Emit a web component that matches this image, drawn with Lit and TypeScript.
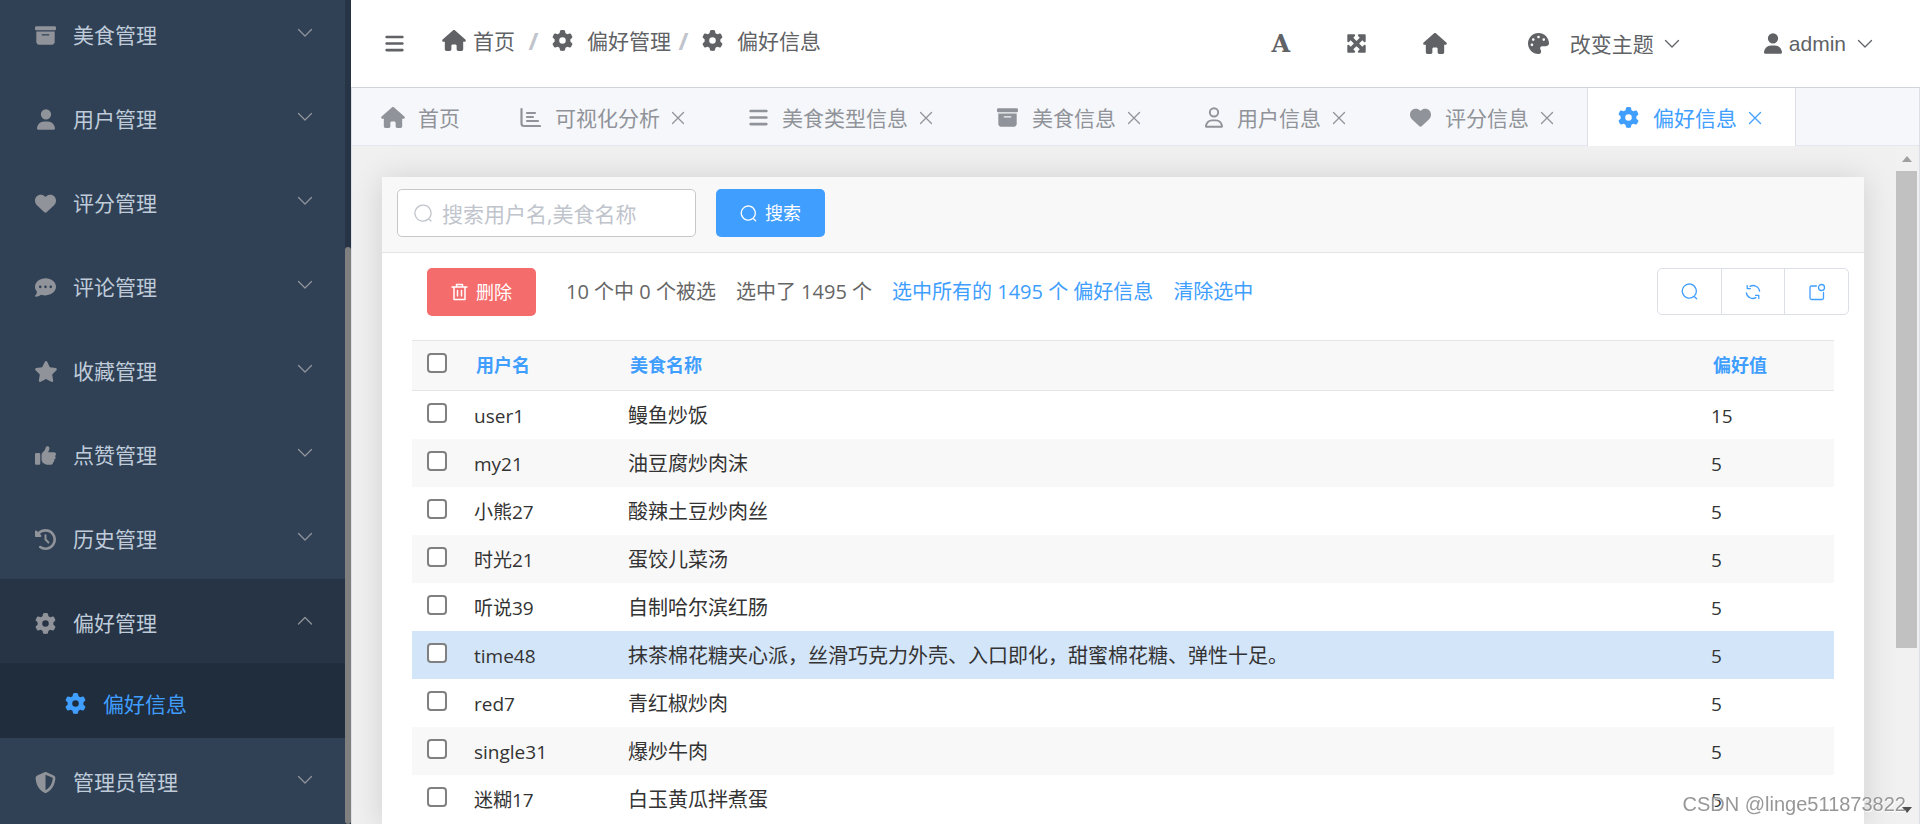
import { LitElement, html, svg, css, nothing } from "lit";
import { customElement, property, state } from "lit/decorators.js";
import { classMap } from "lit/directives/class-map.js";

interface Glyph {
  box: string;
  width: number;
  height: number;
  body: unknown;
}

const solid = (w: number, width: number, d: string): Glyph => ({
  box: `0 0 ${w} 512`,
  width,
  height: 21,
  body: svg`<path fill="currentColor" fill-rule="evenodd" d=${d}></path>`,
});

const line = (width: number, height: number, d: string, stroke = 1.3): Glyph => ({
  box: `0 0 ${width} ${height}`,
  width,
  height,
  body: svg`<path fill="none" stroke="currentColor" stroke-width=${stroke} stroke-linecap="round" stroke-linejoin="round" d=${d}></path>`,
});

const GLYPHS: Record<string, Glyph> = {
  home: solid(576, 24, "M575.8 255.5c0 18-15 32.1-32 32.1h-32l.7 160.2c0 2.7-.2 5.4-.5 8.1V472c0 22.1-17.9 40-40 40H456c-1.1 0-2.2 0-3.3-.1c-1.4 .1-2.8 .1-4.2 .1H416 392c-22.1 0-40-17.9-40-40V448 384c0-17.7-14.3-32-32-32H256c-17.7 0-32 14.3-32 32v64 24c0 22.1-17.9 40-40 40H160 128.1c-1.5 0-3-.1-4.5-.2c-1.2 .1-2.4 .2-3.6 .2H104c-22.1 0-40-17.9-40-40V360c0-.9 0-1.9 .1-2.8V287.6H32c-18 0-32-14-32-32.1c0-9 3-17 10-24L266.4 8c7-7 15-8 22-8s15 2 21 7L564.8 231.5c8 7 12 15 11 24z"),
  gear: solid(512, 21, "M495.9 166.6c3.2 8.7 .5 18.4-6.4 24.6l-43.3 39.4c1.1 8.3 1.7 16.8 1.7 25.4s-.6 17.1-1.7 25.4l43.3 39.4c6.9 6.2 9.6 15.9 6.4 24.6c-4.4 11.9-9.7 23.3-15.8 34.3l-4.7 8.1c-6.6 11-14 21.4-22.1 31.2c-5.9 7.2-15.7 9.6-24.5 6.8l-55.7-17.7c-13.4 10.3-28.2 18.9-44 25.4l-12.5 57.1c-2 9.1-9 16.3-18.2 17.8c-13.8 2.3-28 3.5-42.5 3.5s-28.7-1.2-42.5-3.5c-9.2-1.5-16.2-8.7-18.2-17.8l-12.5-57.1c-15.8-6.5-30.6-15.1-44-25.4L83.1 425.9c-8.8 2.8-18.6 .3-24.5-6.8c-8.1-9.8-15.5-20.2-22.1-31.2l-4.7-8.1c-6.1-11-11.4-22.4-15.8-34.3c-3.2-8.7-.5-18.4 6.4-24.6l43.3-39.4C64.6 273.1 64 264.6 64 256s.6-17.1 1.7-25.4L22.4 191.2c-6.9-6.2-9.6-15.9-6.4-24.6c4.4-11.9 9.7-23.3 15.8-34.3l4.7-8.1c6.6-11 14-21.4 22.1-31.2c5.9-7.2 15.7-9.6 24.5-6.8l55.7 17.7c13.4-10.3 28.2-18.9 44-25.4l12.5-57.1c2-9.1 9-16.3 18.2-17.8C227.3 1.2 241.5 0 256 0s28.7 1.2 42.5 3.5c9.2 1.5 16.2 8.7 18.2 17.8l12.5 57.1c15.8 6.5 30.6 15.1 44 25.4l55.7-17.7c8.8-2.8 18.6-.3 24.5 6.8c8.1 9.8 15.5 20.2 22.1 31.2l4.7 8.1c6.1 11 11.4 22.4 15.8 34.3zM256 336a80 80 0 1 0 0-160 80 80 0 1 0 0 160z"),
  user: solid(448, 18, "M224 256A128 128 0 1 0 224 0a128 128 0 1 0 0 256zm-45.7 48C79.8 304 0 383.8 0 482.3C0 498.7 13.3 512 29.7 512H418.3c16.4 0 29.7-13.3 29.7-29.7C448 383.8 368.2 304 269.7 304H178.3z"),
  userOutline: solid(448, 18, "M304 128a80 80 0 1 0 -160 0 80 80 0 1 0 160 0zM96 128a128 128 0 1 1 256 0A128 128 0 1 1 96 128zM49.3 464H398.7c-8.9-63.3-63.3-112-129-112H178.3c-65.7 0-120.1 48.7-129 112zM0 482.3C0 383.8 79.8 304 178.3 304h91.4C368.2 304 448 383.8 448 482.3c0 16.4-13.3 29.7-29.7 29.7H29.7C13.3 512 0 498.7 0 482.3z"),
  heart: solid(512, 21, "M47.6 300.4L228.3 469.1c7.5 7 17.4 10.9 27.7 10.9s20.2-3.9 27.7-10.9L464.4 300.4c30.4-28.3 47.6-68 47.6-109.5v-5.8c0-69.9-50.5-129.5-119.4-141C347 36.5 300.6 51.4 268 84L256 96 244 84c-32.6-32.6-79-47.5-124.6-39.9C50.5 55.6 0 115.2 0 185.1v5.8c0 41.5 17.2 81.2 47.6 109.5z"),
  archive: solid(512, 21, "M32 32H480c17.7 0 32 14.3 32 32V96c0 17.7-14.3 32-32 32H32C14.3 128 0 113.7 0 96V64C0 46.3 14.3 32 32 32zm0 128H480V416c0 35.3-28.7 64-64 64H96c-35.3 0-64-28.7-64-64V160zm128 80c0 8.8 7.2 16 16 16H336c8.8 0 16-7.2 16-16s-7.2-16-16-16H176c-8.8 0-16 7.2-16 16z"),
  star: solid(576, 24, "M316.9 18C311.6 7 300.4 0 288.1 0s-23.4 7-28.8 18L195 150.3 51.4 171.5c-12 1.8-22 10.2-25.7 21.7s-.7 24.2 7.9 32.7L137.8 329 113.2 474.7c-2 12 3 24.2 12.9 31.3s23 8 33.8 2.3l128.3-68.5 128.3 68.5c10.8 5.7 23.9 4.9 33.8-2.3s14.9-19.3 12.9-31.3L438.5 329 542.7 225.9c8.6-8.5 11.7-21.2 7.9-32.7s-13.7-19.9-25.7-21.7L381.2 150.3 316.9 18z"),
  comment: solid(512, 21, "M256 448c141.4 0 256-93.1 256-208S397.4 32 256 32S0 125.1 0 240c0 45.1 17.7 86.8 47.7 120.9c-1.9 24.5-11.4 46.3-21.4 62.9c-5.5 9.2-11.1 16.6-15.2 21.6c-2.1 2.5-3.7 4.4-4.9 5.7c-.6 .6-1 1.1-1.3 1.4l-.3 .3c-4.6 4.6-5.9 11.4-3.4 17.4c2.5 6 8.3 9.9 14.8 9.9c28.7 0 57.6-8.9 81.6-19.3c22.9-10 42.4-21.9 54.3-30.6c31.8 11.5 67 17.9 104.1 17.9zM128 208a32 32 0 1 1 0 64 32 32 0 1 1 0-64zm128 0a32 32 0 1 1 0 64 32 32 0 1 1 0-64zm96 32a32 32 0 1 1 64 0 32 32 0 1 1 -64 0z"),
  thumb: solid(512, 21, "M313.4 32.9c26 5.2 42.9 30.5 37.7 56.5l-2.3 11.4c-5.3 26.7-15.1 52.1-28.8 75.2H464c26.5 0 48 21.5 48 48c0 18.5-10.5 34.6-25.9 42.6C497 275.4 504 288.9 504 304c0 23.4-16.8 42.9-38.9 47.1c4.4 7.3 6.9 15.8 6.9 24.9c0 21.3-13.9 39.4-33.1 45.6c.7 3.3 1.1 6.8 1.1 10.4c0 26.5-21.5 48-48 48H294.5c-19 0-37.5-5.6-53.3-16.1l-38.5-25.7C176 420.4 160 390.4 160 358.3V320 272 247.1c0-29.2 13.3-56.7 36-75l7.4-5.9c26.5-21.2 44.6-51 51.2-84.2l2.3-11.4c5.2-26 30.5-42.9 56.5-37.7zM32 192H96c17.7 0 32 14.3 32 32V448c0 17.7-14.3 32-32 32H32c-17.7 0-32-14.3-32-32V224c0-17.7 14.3-32 32-32z"),
  history: solid(512, 21, "M75 75L41 41C25.9 25.9 0 36.6 0 57.9V168c0 13.3 10.7 24 24 24H134.1c21.4 0 32.1-25.9 17-41l-30.8-30.8C155 85.5 203 64 256 64c106 0 192 86 192 192s-86 192-192 192c-40.8 0-78.6-12.7-109.7-34.4c-14.5-10.1-34.4-6.6-44.6 7.9s-6.6 34.4 7.9 44.6C151.2 495 201.7 512 256 512c141.4 0 256-114.6 256-256S397.4 0 256 0C185.3 0 121.3 28.7 75 75zm181 53c-13.3 0-24 10.7-24 24V256c0 6.4 2.5 12.5 7 17l72 72c9.4 9.4 24.6 9.4 33.9 0s9.4-24.6 0-33.9l-65-65V152c0-13.3-10.7-24-24-24z"),
  shield: solid(512, 21, "M256 0c4.6 0 9.2 1 13.4 2.9L457.7 82.8c22 9.3 38.4 31 38.3 57.2c-.5 99.2-41.3 280.7-213.6 363.2c-16.7 8-36.1 8-52.8 0C57.3 420.7 16.5 239.2 16 140c-.1-26.2 16.3-47.9 38.3-57.2L242.7 2.9C246.8 1 251.4 0 256 0zm0 66.8V444.8C394 378 431.1 230.1 432 141.4L256 66.8z"),
  bars: solid(448, 19, "M0 96C0 78.3 14.3 64 32 64H416c17.7 0 32 14.3 32 32s-14.3 32-32 32H32C14.3 128 0 113.7 0 96zM0 256c0-17.7 14.3-32 32-32H416c17.7 0 32 14.3 32 32s-14.3 32-32 32H32c-17.7 0-32-14.3-32-32zM448 416c0 17.7-14.3 32-32 32H32c-17.7 0-32-14.3-32-32s14.3-32 32-32H416c17.7 0 32 14.3 32 32z"),
  palette: solid(512, 21, "M512 256c0 .9 0 1.8 0 2.7c-.4 36.5-33.6 61.3-70.1 61.3H344c-26.5 0-48 21.5-48 48c0 3.4 .4 6.7 1 9.9c2.1 10.2 6.5 20 10.8 29.9c6.1 13.8 12.1 27.5 12.1 42c0 31.8-21.6 60.7-53.4 62c-3.5 .1-7 .2-10.6 .2C114.6 512 0 397.4 0 256S114.6 0 256 0S512 114.6 512 256zM128 288a32 32 0 1 0 -64 0 32 32 0 1 0 64 0zm0-96a32 32 0 1 0 0-64 32 32 0 1 0 0 64zM288 96a32 32 0 1 0 -64 0 32 32 0 1 0 64 0zm96 96a32 32 0 1 0 0-64 32 32 0 1 0 0 64z"),
  expand: solid(512, 21, "M200 32H56C42.7 32 32 42.7 32 56V200c0 9.7 5.8 18.5 14.8 22.2s19.3 1.7 26.2-5.2l40-40 79 79-79 79L73 295c-6.9-6.9-17.2-8.9-26.2-5.2S32 302.3 32 312V456c0 13.3 10.7 24 24 24H200c9.7 0 18.5-5.8 22.2-14.8s1.7-19.3-5.2-26.2l-40-40 79-79 79 79-40 40c-6.9 6.9-8.9 17.2-5.2 26.2s12.5 14.8 22.2 14.8H456c13.3 0 24-10.7 24-24V312c0-9.7-5.8-18.5-14.8-22.2s-19.3-1.7-26.2 5.2l-40 40-79-79 79-79 40 40c6.9 6.9 17.2 8.9 26.2 5.2s14.8-12.5 14.8-22.2V56c0-13.3-10.7-24-24-24H312c-9.7 0-18.5 5.8-22.2 14.8s-1.7 19.3 5.2 26.2l40 40-79 79-79-79 40-40c6.9-6.9 8.9-17.2 5.2-26.2S209.7 32 200 32z"),
  chart: line(21, 21, "M1.5 2V16.5Q1.5 19 4 19H20M7 6H15M7 10H13M7 14H18", 2.2),
  down: line(16, 10, "M1.5 1.5L8 8L14.5 1.5"),
  up: line(16, 10, "M1.5 8L8 1.5L14.5 8"),
  close: line(14, 14, "M1.5 1.5L12.5 12.5M12.5 1.5L1.5 12.5"),
  search: line(18, 18, "M14.6 14.8A8 8 0 1 1 15.6 13.6M14.6 14.8L17 17"),
  searchSmall: line(17, 17, "M13 13.2A7 7 0 1 1 13.9 12.2M13 13.2L15.6 15.8"),
  trash: line(17, 18, "M1 4H16M5.5 4V1.5H11.5V4M3 4V16.5H14V4M6.5 7.5V13M10.5 7.5V13", 1.5),
  refresh: line(16, 16, "M5 2.3A6.6 6.6 0 0 1 14.6 7.2M1.4 8.8A6.6 6.6 0 0 0 11 13.7M2.2 1.6V4.6H5.4M13.8 14.4V11.4H10.6"),
  note: line(18, 18, "M8.5 3H3.5Q2 3 2 4.5V15Q2 16.5 3.5 16.5H14Q15.5 16.5 15.5 15V9.5M16.5 4.5A3 3 0 1 1 10.5 4.5A3 3 0 1 1 16.5 4.5"),
};

@customElement("ui-icon")
export class UiIcon extends LitElement {
  static styles = css`
    :host {
      display: inline-flex;
      flex: none;
    }
    .glyph {
      display: block;
    }
  `;

  @property() name = "home";

  render() {
    const g = GLYPHS[this.name];
    return html`<svg class="glyph" viewBox=${g.box} width=${g.width} height=${g.height} aria-hidden="true">${g.body}</svg>`;
  }
}

@customElement("side-menu")
export class SideMenu extends LitElement {
  static styles = css`
    :host {
      display: flex;
      flex: none;
      width: 351px;
      background: #304156;
      overflow: hidden;
      font-size: 21px;
    }
    .list {
      flex: 1;
      display: flex;
      flex-direction: column;
      justify-content: flex-end;
      padding-bottom: 2px;
    }
    .item {
      flex: none;
      box-sizing: border-box;
      display: flex;
      align-items: center;
      height: 84px;
      padding: 0 32px 0 33px;
      color: #bfcbd9;
      text-decoration: none;
      line-height: 30px;
    }
    .icon {
      display: flex;
      justify-content: center;
      width: 25px;
      margin-right: 15px;
      padding-top: 4px;
      color: #909399;
    }
    .label {
      flex: 1;
      padding-top: 4px;
    }
    .arrow {
      color: #909399;
    }
    .open {
      background: #263445;
    }
    .sub {
      height: 75px;
      padding-top: 2px;
      padding-left: 63px;
      background: #1f2d3d;
      color: #409eff;
    }
    .sub .icon {
      color: #409eff;
    }
    .track {
      display: flex;
      flex-direction: column;
      justify-content: flex-end;
      width: 6px;
      background: #263445;
    }
    .thumb {
      height: 70%;
      border-radius: 3px;
      background: #7f7f7f;
    }
  `;

  private items = [
    ["archive", "美食管理"],
    ["user", "用户管理"],
    ["heart", "评分管理"],
    ["comment", "评论管理"],
    ["star", "收藏管理"],
    ["thumb", "点赞管理"],
    ["history", "历史管理"],
    ["gear", "偏好管理", "偏好信息"],
    ["shield", "管理员管理"],
  ];

  render() {
    return html`
      <nav class="list">
        ${this.items.map(
          ([icon, label, child]) => html`
            <a class=${classMap({ item: true, open: !!child })} href="#">
              <span class="icon"><ui-icon name=${icon}></ui-icon></span>
              <span class="label">${label}</span>
              <ui-icon class="arrow" name=${child ? "up" : "down"}></ui-icon>
            </a>
            ${child
              ? html`<a class="item sub" href="#">
                  <span class="icon"><ui-icon name=${icon}></ui-icon></span>
                  <span class="label">${child}</span>
                </a>`
              : nothing}
          `
        )}
      </nav>
      <div class="track"><div class="thumb"></div></div>
    `;
  }
}

@customElement("top-bar")
export class TopBar extends LitElement {
  static styles = css`
    :host {
      display: flex;
      flex: none;
      align-items: center;
      justify-content: space-between;
      height: 87px;
      padding: 0 47px 0 34px;
      background: #fff;
      color: #606266;
      font-size: 21px;
      line-height: 30px;
    }
    .group,
    .crumbs,
    .crumb,
    .action {
      display: flex;
      align-items: center;
    }
    .action {
      padding: 0;
      border: 0;
      background: none;
      color: inherit;
      font: inherit;
      line-height: 30px;
    }
    .crumbs {
      margin-left: 38px;
      padding-bottom: 6px;
    }
    .crumb {
      gap: 14px;
      color: inherit;
      text-decoration: none;
    }
    .first {
      gap: 7px;
      padding-right: 6px;
    }
    .slash {
      width: 11px;
      margin: 0 13px 0 7px;
      color: #c0c4cc;
      font-weight: 700;
      font-size: 24px;
      text-align: center;
    }
    .tools {
      gap: 56px;
      margin-right: 81px;
    }
    .letter {
      width: 18px;
      justify-content: center;
      font-family: "DejaVu Serif", serif;
      font-size: 24px;
      font-weight: 700;
    }
    .theme {
      gap: 10px;
      margin-right: 84px;
    }
    .swatch {
      margin-right: 11px;
    }
    .account {
      gap: 7px;
      font-family: "Liberation Sans", Arial, sans-serif;
    }
    .name {
      margin-right: 4px;
    }
  `;

  render() {
    return html`
      <div class="group">
        <button class="action" aria-label="折叠菜单"><ui-icon name="bars"></ui-icon></button>
        <nav class="crumbs">
          <a class="crumb first" href="#"><ui-icon name="home"></ui-icon>首页</a>
          <span class="slash">/</span>
          <a class="crumb" href="#"><ui-icon name="gear"></ui-icon>偏好管理</a>
          <span class="slash">/</span>
          <a class="crumb" href="#"><ui-icon name="gear"></ui-icon>偏好信息</a>
        </nav>
      </div>
      <div class="group">
        <div class="group tools">
          <button class="action letter" aria-label="字号">A</button>
          <button class="action" aria-label="全屏"><ui-icon name="expand"></ui-icon></button>
          <button class="action" aria-label="首页"><ui-icon name="home"></ui-icon></button>
        </div>
        <button class="action theme">
          <ui-icon class="swatch" name="palette"></ui-icon>改变主题<ui-icon name="down"></ui-icon>
        </button>
        <button class="action account">
          <ui-icon name="user"></ui-icon><span class="name">admin</span><ui-icon name="down"></ui-icon>
        </button>
      </div>
    `;
  }
}

@customElement("tab-strip")
export class TabStrip extends LitElement {
  static styles = css`
    :host {
      display: flex;
      flex: none;
      height: 57px;
      background: #f5f7fa;
      border-bottom: 1px solid #e4e7ed;
      color: #909399;
      font-size: 21px;
      line-height: 30px;
    }
    .tab {
      display: flex;
      align-items: center;
      margin: 0 0 -2px -1px;
      padding: 0 30px;
      border: 1px solid transparent;
      border-width: 0 1px;
    }
    .active {
      background: #fff;
      border-color: #dcdfe6;
      color: #409eff;
    }
    .link {
      display: flex;
      align-items: center;
      gap: 14px;
      color: inherit;
      text-decoration: none;
      white-space: nowrap;
    }
    .fixed {
      padding: 0 29px;
    }
    .fixed .link {
      gap: 13px;
    }
    .close {
      display: flex;
      justify-content: center;
      width: 19px;
      margin: 0 1px 0 8px;
      padding: 0;
      border: 0;
      background: none;
      color: inherit;
    }
  `;

  private tabs = [
    ["home", "首页"],
    ["chart", "可视化分析"],
    ["bars", "美食类型信息"],
    ["archive", "美食信息"],
    ["userOutline", "用户信息"],
    ["heart", "评分信息"],
    ["gear", "偏好信息"],
  ];

  render() {
    return this.tabs.map(
      ([icon, label], i) => html`
        <div class=${classMap({ tab: true, fixed: !i, active: i === this.tabs.length - 1 })}>
          <a class="link" href="#"><ui-icon name=${icon}></ui-icon>${label}</a>
          ${i
            ? html`<button class="close" aria-label="关闭${label}"><ui-icon name="close"></ui-icon></button>`
            : nothing}
        </div>
      `
    );
  }
}

@customElement("preference-table")
export class PreferenceTable extends LitElement {
  static styles = css`
    :host {
      display: block;
      padding: 24px 30px 0;
    }
    .table {
      width: 100%;
      table-layout: fixed;
      border-collapse: collapse;
      color: #333;
      font-size: 19px;
      text-align: left;
    }
    .pick {
      width: 47px;
    }
    .who {
      width: 154px;
    }
    .score {
      width: 138px;
    }
    .head {
      height: 50px;
      background: #f8f8f8;
      border: 1px solid #e5e5e5;
      border-width: 1px 0;
      color: #409eff;
    }
    .title {
      padding: 0 17px 2px;
      font-size: 18px;
      font-weight: 700;
      line-height: 24px;
    }
    .row {
      height: 48px;
    }
    .row:nth-child(even) {
      background: #f8f8f8;
    }
    .row.hover {
      background: #d3e5f9;
    }
    .cell {
      padding: 2px 15px 0;
      line-height: 46px;
      white-space: nowrap;
    }
    .food {
      font-size: 20px;
    }
    .tick {
      padding: 12px 0 0 15px;
      vertical-align: top;
    }
    .box {
      appearance: none;
      display: block;
      box-sizing: border-box;
      width: 20px;
      height: 20px;
      margin: 0;
      border: 2px solid #808080;
      border-radius: 4px;
      background: #fff;
    }
    .box:checked {
      background: #409eff;
    }
  `;

  private rows: [string, string, number][] = [
    ["user1", "鳗鱼炒饭", 15],
    ["my21", "油豆腐炒肉沫", 5],
    ["小熊27", "酸辣土豆炒肉丝", 5],
    ["时光21", "蛋饺儿菜汤", 5],
    ["听说39", "自制哈尔滨红肠", 5],
    ["time48", "抹茶棉花糖夹心派，丝滑巧克力外壳、入口即化，甜蜜棉花糖、弹性十足。", 5],
    ["red7", "青红椒炒肉", 5],
    ["single31", "爆炒牛肉", 5],
    ["迷糊17", "白玉黄瓜拌煮蛋", 5],
  ];

  @state() private hovered = 5;

  render() {
    return html`
      <table class="table">
        <colgroup>
          <col class="pick" /><col class="who" /><col /><col class="score" />
        </colgroup>
        <thead>
          <tr class="head">
            <th class="tick"><input class="box" type="checkbox" aria-label="全选" /></th>
            <th class="title">用户名</th>
            <th class="title">美食名称</th>
            <th class="title">偏好值</th>
          </tr>
        </thead>
        <tbody>
          ${this.rows.map(
            ([who, food, score], i) => html`
              <tr class=${classMap({ row: true, hover: i === this.hovered })} @mouseenter=${() => (this.hovered = i)}>
                <td class="tick"><input class="box" type="checkbox" aria-label=${who} /></td>
                <td class="cell">${who}</td>
                <td class="cell food">${food}</td>
                <td class="cell">${score}</td>
              </tr>
            `
          )}
        </tbody>
      </table>
    `;
  }
}

@customElement("app-root")
export class AppRoot extends LitElement {
  static styles = css`
    :host {
      display: flex;
      height: 100vh;
      overflow: hidden;
      font-family: "Open Sans", "Noto Sans CJK SC", sans-serif;
      font-weight: 400;
    }
    .main {
      flex: 1;
      min-width: 0;
      display: flex;
      flex-direction: column;
    }
    .frame {
      flex: 1;
      min-height: 0;
      display: flex;
      flex-direction: column;
      border: 1px solid #dcdfe6;
      border-top-color: #d0d3da;
      border-bottom: 0;
    }
    .view {
      flex: 1;
      min-height: 0;
      display: flex;
      padding-right: 2px;
      background: #f0f0f0;
    }
    .page {
      flex: 1;
      min-width: 0;
      overflow: hidden;
      padding: 31px 32px 0 30px;
    }
    .card {
      min-height: 100%;
      background: #fff;
      box-shadow: 0 2px 30px rgba(0, 0, 0, 0.14);
    }
    .filter {
      display: flex;
      gap: 20px;
      padding: 12px 15px 15px;
      background: #f8f8f8;
      border-bottom: 1px solid #e5e5e5;
    }
    .field {
      box-sizing: border-box;
      display: flex;
      align-items: center;
      gap: 10px;
      width: 299px;
      height: 48px;
      padding: 0 16px;
      border: 1px solid #c8c8c8;
      border-radius: 5px;
      background: #fff;
      color: #c0c4cc;
    }
    .input {
      flex: 1;
      min-width: 0;
      padding: 2px 0 0;
      border: 0;
      outline: 0;
      background: none;
      color: #606266;
      font-family: inherit;
      font-size: 21px;
      line-height: 30px;
    }
    .input::placeholder {
      color: #c0c4cc;
    }
    .btn {
      display: flex;
      align-items: center;
      gap: 8px;
      height: 48px;
      padding: 0 24px;
      border: 0;
      border-radius: 5px;
      background: #409eff;
      color: #fff;
      font-family: inherit;
      font-size: 18px;
      line-height: 24px;
    }
    .danger {
      margin-right: 10px;
      background: #f56c6c;
    }
    .toolbar {
      display: flex;
      align-items: center;
      gap: 20px;
      padding: 15px 15px 0 45px;
      color: #666;
      font-size: 20px;
      line-height: 30px;
    }
    .link {
      color: #409eff;
      text-decoration: none;
    }
    .tools {
      box-sizing: border-box;
      display: flex;
      align-self: flex-start;
      width: 192px;
      height: 47px;
      margin-left: auto;
      border: 1px solid #dcdfe6;
      border-radius: 5px;
    }
    .tool {
      flex: 1;
      display: flex;
      align-items: center;
      justify-content: center;
      padding: 0;
      border: 0;
      background: none;
      color: #409eff;
    }
    .tool + .tool {
      border-left: 1px solid #dcdfe6;
    }
    .rail {
      display: flex;
      flex-direction: column;
      align-items: center;
      width: 21px;
      padding: 10px 0 11px;
      box-sizing: border-box;
      background: #f1f1f1;
    }
    .arrow {
      flex: none;
      border: 5px solid transparent;
    }
    .before {
      border-top-width: 0;
      border-bottom: 6px solid #a0a0a0;
    }
    .after {
      border-bottom-width: 0;
      border-top: 6px solid #505050;
    }
    .groove {
      flex: 1;
      width: 100%;
      padding: 9px 0 8px;
    }
    .thumb {
      height: 76%;
      background: #c1c1c1;
    }
    .mark {
      position: fixed;
      right: 14px;
      bottom: 5px;
      color: rgba(140, 140, 140, 0.9);
      font-family: "Liberation Sans", Arial, sans-serif;
      font-size: 20px;
      line-height: 30px;
      text-shadow: 1px 1px 1px #fff;
      pointer-events: none;
    }
  `;

  render() {
    return html`
      <side-menu></side-menu>
      <main class="main">
        <top-bar></top-bar>
        <div class="frame">
          <tab-strip></tab-strip>
          <div class="view">
            <div class="page">
              <section class="card">
                <form class="filter" @submit=${(e: Event) => e.preventDefault()}>
                  <label class="field">
                    <ui-icon name="search"></ui-icon>
                    <input class="input" type="text" placeholder="搜索用户名,美食名称" aria-label="搜索" />
                  </label>
                  <button class="btn" type="submit"><ui-icon name="searchSmall"></ui-icon>搜索</button>
                </form>
                <div class="toolbar">
                  <button class="btn danger"><ui-icon name="trash"></ui-icon>删除</button>
                  <span>10 个中 0 个被选</span>
                  <span>选中了 1495 个</span>
                  <a class="link" href="#">选中所有的 1495 个 偏好信息</a>
                  <a class="link" href="#">清除选中</a>
                  <div class="tools">
                    <button class="tool" aria-label="搜索"><ui-icon name="searchSmall"></ui-icon></button>
                    <button class="tool" aria-label="刷新"><ui-icon name="refresh"></ui-icon></button>
                    <button class="tool" aria-label="导出"><ui-icon name="note"></ui-icon></button>
                  </div>
                </div>
                <preference-table></preference-table>
              </section>
            </div>
            <div class="rail">
              <span class="arrow before"></span>
              <div class="groove"><div class="thumb"></div></div>
              <span class="arrow after"></span>
            </div>
          </div>
        </div>
      </main>
      <div class="mark">CSDN @linge511873822</div>
    `;
  }
}
